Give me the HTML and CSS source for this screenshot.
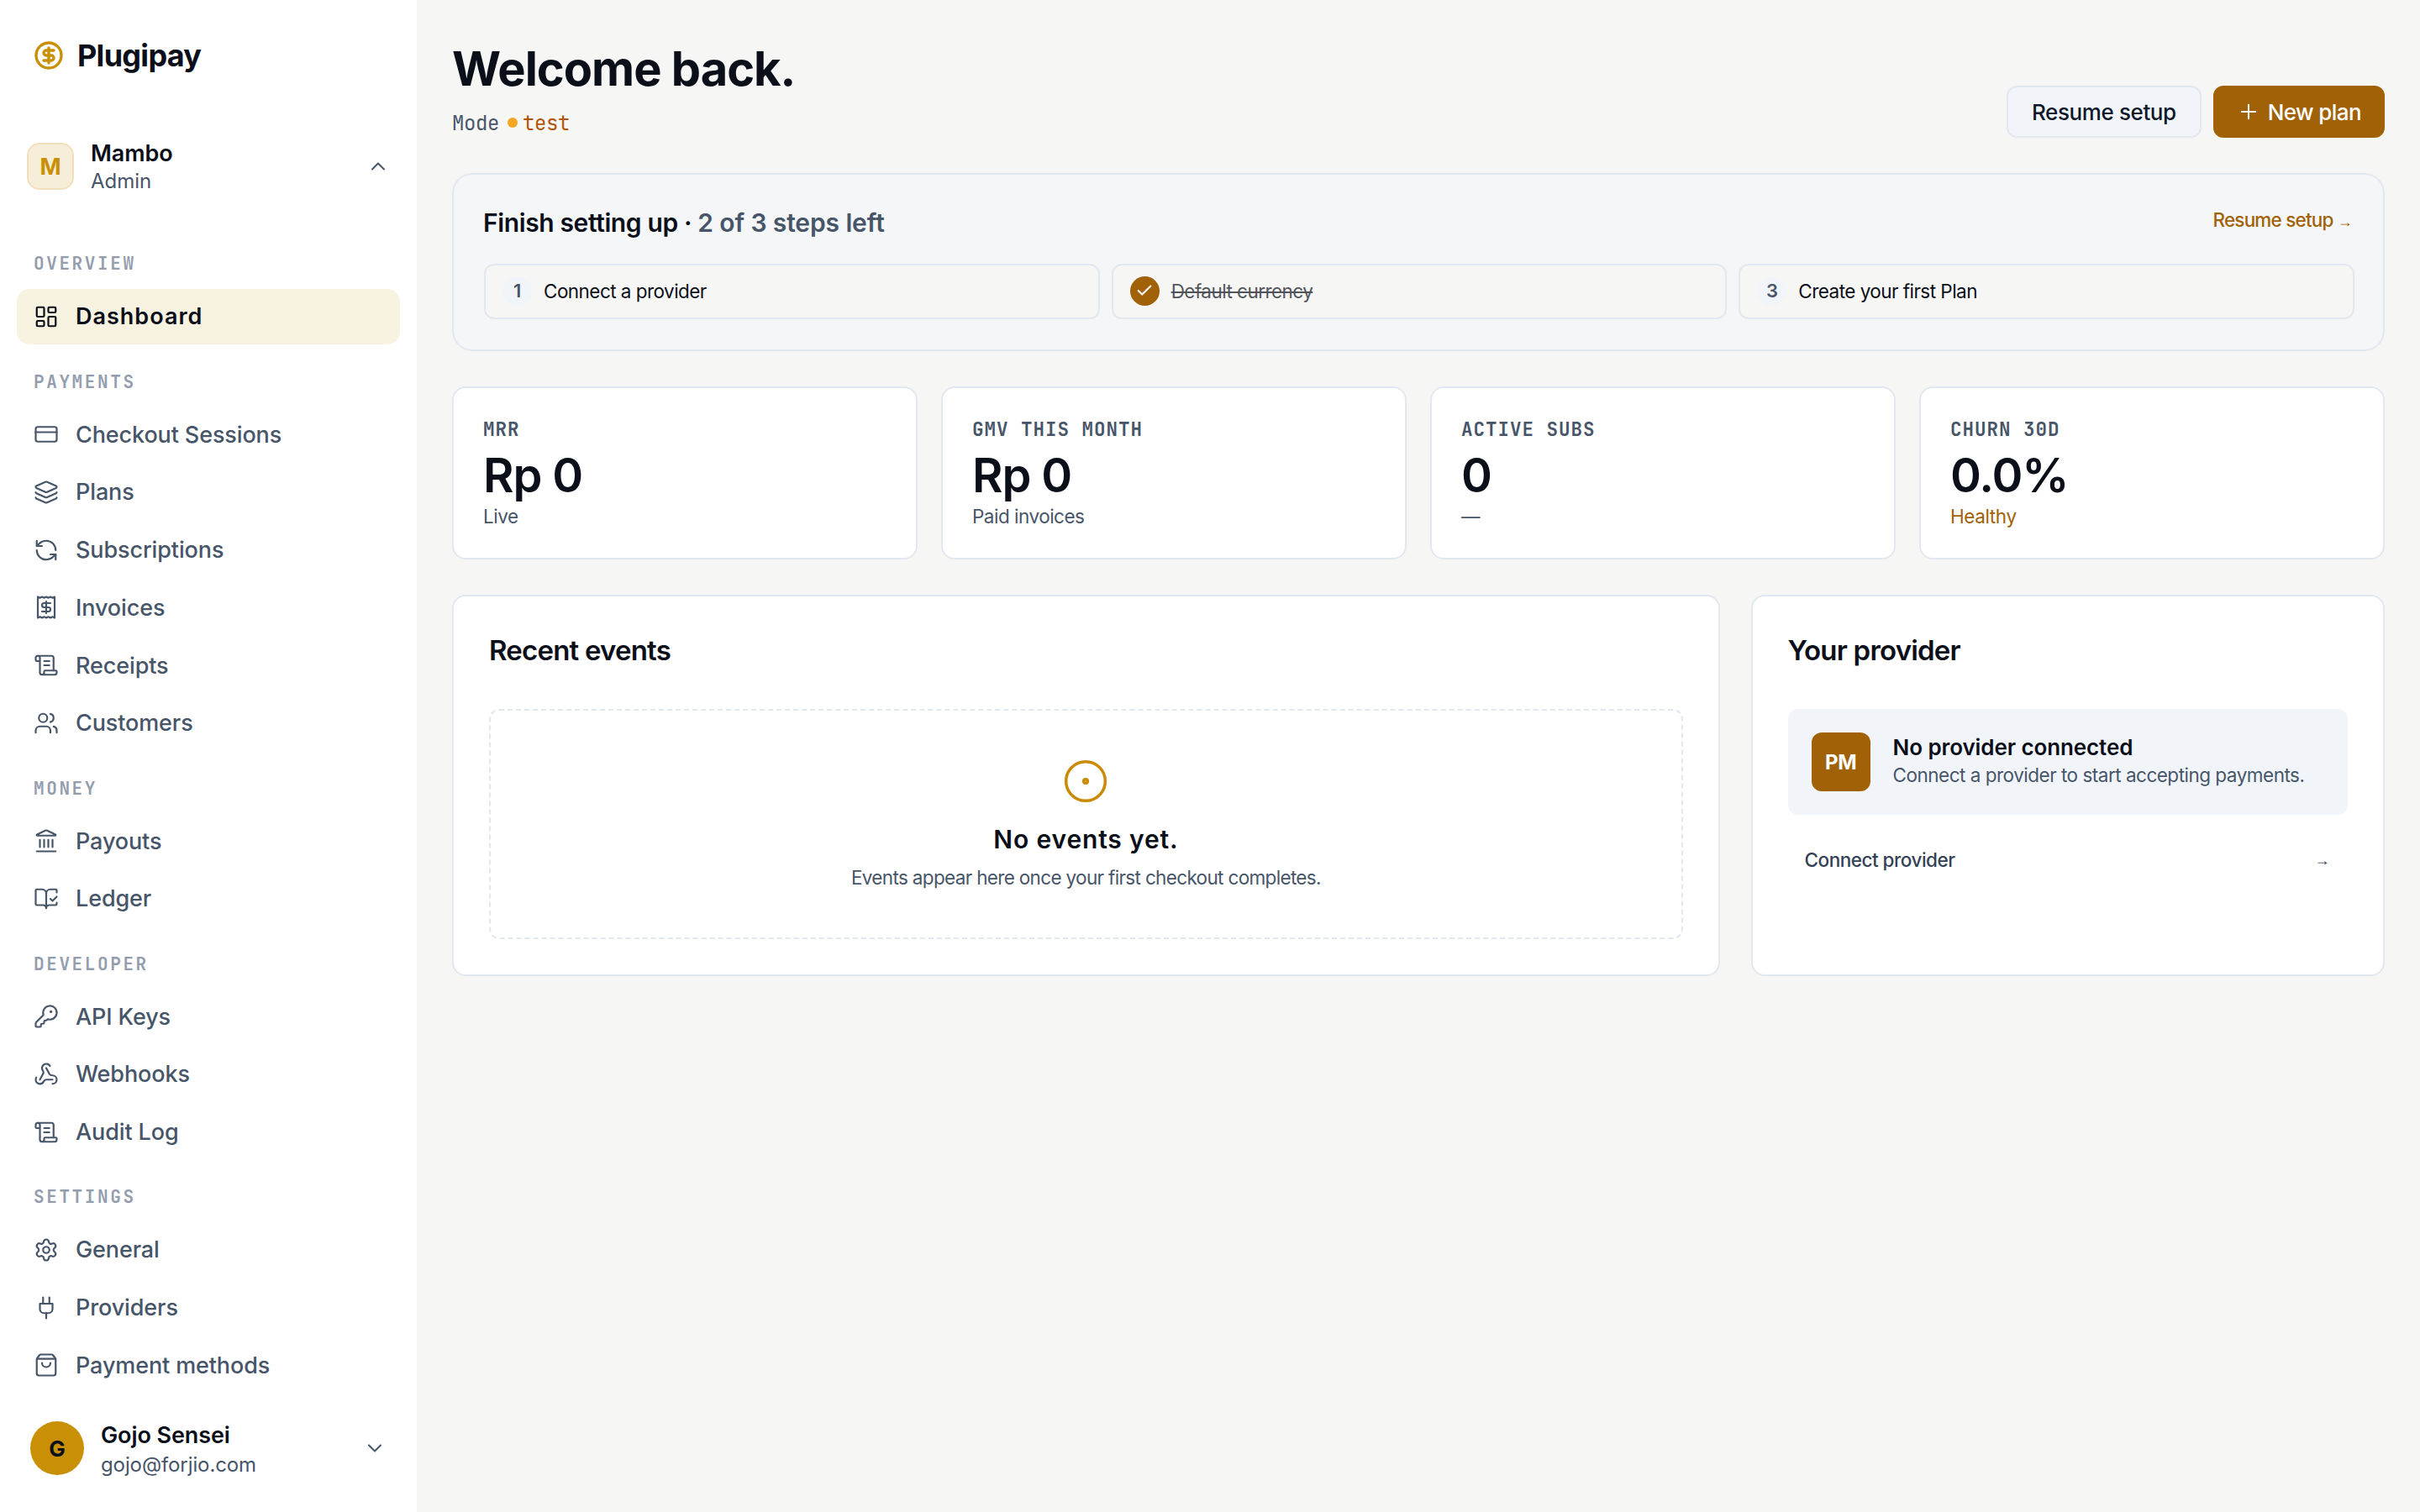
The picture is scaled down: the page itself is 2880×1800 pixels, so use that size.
FILE: index.html
```html
<!DOCTYPE html>
<html lang="en">

<head>
    <meta charset="UTF-8">
    <meta name="viewport" content="width=device-width, initial-scale=1.0">
    <title>Plugipay - Dashboard</title>
    <link rel="stylesheet" href="styles.css">
</head>

<body>
    <div class="app">
        <aside class="sidebar">
            <div class="brand">
                <svg class="icon brand-icon" viewBox="0 0 24 24"><circle cx="12" cy="12" r="10"/><path d="M16 8h-6a2 2 0 1 0 0 4h4a2 2 0 1 1 0 4H8"/><path d="M12 18V6"/></svg>
                <span>Plugipay</span>
            </div>

            <div class="workspace">
                <div class="workspace-logo">M</div>
                <div class="who">
                    <div class="who-name">Mambo</div>
                    <div class="who-sub">Admin</div>
                </div>
                <svg class="icon chevron" viewBox="0 0 24 24"><path d="m18 15-6-6-6 6"/></svg>
            </div>

            <nav class="nav">
                <div class="nav-label">OVERVIEW</div>
                <a class="nav-item active">
                    <svg class="icon" viewBox="0 0 24 24"><rect width="7" height="9" x="3" y="3" rx="1"/><rect width="7" height="5" x="14" y="3" rx="1"/><rect width="7" height="9" x="14" y="12" rx="1"/><rect width="7" height="5" x="3" y="16" rx="1"/></svg>
                    Dashboard
                </a>

                <div class="nav-label">PAYMENTS</div>
                <a class="nav-item">
                    <svg class="icon" viewBox="0 0 24 24"><rect width="20" height="14" x="2" y="5" rx="2"/><path d="M2 10h20"/></svg>
                    Checkout Sessions
                </a>
                <a class="nav-item">
                    <svg class="icon" viewBox="0 0 24 24"><path d="M12.83 2.18a2 2 0 0 0-1.66 0L2.6 6.08a1 1 0 0 0 0 1.83l8.58 3.91a2 2 0 0 0 1.66 0l8.58-3.9a1 1 0 0 0 0-1.83z"/><path d="M2 12a1 1 0 0 0 .58.91l8.6 3.91a2 2 0 0 0 1.65 0l8.58-3.9A1 1 0 0 0 22 12"/><path d="M2 17a1 1 0 0 0 .58.91l8.6 3.91a2 2 0 0 0 1.65 0l8.58-3.9A1 1 0 0 0 22 17"/></svg>
                    Plans
                </a>
                <a class="nav-item">
                    <svg class="icon" viewBox="0 0 24 24"><path d="M21 12a9 9 0 0 0-9-9 9.75 9.75 0 0 0-6.74 2.74L3 8"/><path d="M3 3v5h5"/><path d="M3 12a9 9 0 0 0 9 9 9.75 9.75 0 0 0 6.74-2.74L21 16"/><path d="M16 16h5v5"/></svg>
                    Subscriptions
                </a>
                <a class="nav-item">
                    <svg class="icon" viewBox="0 0 24 24"><path d="M4 2v20l2-1 2 1 2-1 2 1 2-1 2 1 2-1 2 1V2l-2 1-2-1-2 1-2-1-2 1-2-1-2 1Z"/><path d="M16 8h-6a2 2 0 1 0 0 4h4a2 2 0 1 1 0 4H8"/><path d="M12 17.5v-11"/></svg>
                    Invoices
                </a>
                <a class="nav-item">
                    <svg class="icon" viewBox="0 0 24 24"><path d="M15 12h-5"/><path d="M15 8h-5"/><path d="M19 17V5a2 2 0 0 0-2-2H4"/><path d="M8 21h12a2 2 0 0 0 2-2v-1a1 1 0 0 0-1-1H11a1 1 0 0 0-1 1v1a2 2 0 1 1-4 0V5a2 2 0 1 0-4 0v2a1 1 0 0 0 1 1h3"/></svg>
                    Receipts
                </a>
                <a class="nav-item">
                    <svg class="icon" viewBox="0 0 24 24"><path d="M16 21v-2a4 4 0 0 0-4-4H6a4 4 0 0 0-4 4v2"/><circle cx="9" cy="7" r="4"/><path d="M22 21v-2a4 4 0 0 0-3-3.87"/><path d="M16 3.13a4 4 0 0 1 0 7.75"/></svg>
                    Customers
                </a>

                <div class="nav-label">MONEY</div>
                <a class="nav-item">
                    <svg class="icon" viewBox="0 0 24 24"><path d="M10 18v-7"/><path d="M11.12 2.198a2 2 0 0 1 1.76.006l7.866 3.847c.476.233.31.949-.22.949H3.474c-.53 0-.695-.716-.22-.949z"/><path d="M14 18v-7"/><path d="M18 18v-7"/><path d="M3 22h18"/><path d="M6 18v-7"/></svg>
                    Payouts
                </a>
                <a class="nav-item">
                    <svg class="icon" viewBox="0 0 24 24"><path d="M12 21V7"/><path d="m16 12 2 2 4-4"/><path d="M22 6V4a1 1 0 0 0-1-1h-5a4 4 0 0 0-4 4 4 4 0 0 0-4-4H3a1 1 0 0 0-1 1v13a1 1 0 0 0 1 1h6a3 3 0 0 1 3 3 3 3 0 0 1 3-3h6a1 1 0 0 0 1-1v-1.3"/></svg>
                    Ledger
                </a>

                <div class="nav-label">DEVELOPER</div>
                <a class="nav-item">
                    <svg class="icon" viewBox="0 0 24 24"><path d="M2.586 17.414A2 2 0 0 0 2 18.828V21a1 1 0 0 0 1 1h3a1 1 0 0 0 1-1v-1a1 1 0 0 1 1-1h1a1 1 0 0 0 1-1v-1a1 1 0 0 1 1-1h.172a2 2 0 0 0 1.414-.586l.814-.814a6.5 6.5 0 1 0-4-4z"/><circle cx="16.5" cy="7.5" r=".5" fill="currentColor"/></svg>
                    API Keys
                </a>
                <a class="nav-item">
                    <svg class="icon" viewBox="0 0 24 24"><path d="M18 16.98h-5.99c-1.1 0-1.95.94-2.48 1.9A4 4 0 0 1 2 17c.01-.7.2-1.4.57-2"/><path d="m6 17 3.13-5.78c.53-.97.1-2.18-.5-3.1a4 4 0 1 1 6.89-4.06"/><path d="m12 6 3.13 5.73C15.66 12.7 16.9 13 18 13a4 4 0 0 1 0 8"/></svg>
                    Webhooks
                </a>
                <a class="nav-item">
                    <svg class="icon" viewBox="0 0 24 24"><path d="M15 12h-5"/><path d="M15 8h-5"/><path d="M19 17V5a2 2 0 0 0-2-2H4"/><path d="M8 21h12a2 2 0 0 0 2-2v-1a1 1 0 0 0-1-1H11a1 1 0 0 0-1 1v1a2 2 0 1 1-4 0V5a2 2 0 1 0-4 0v2a1 1 0 0 0 1 1h3"/></svg>
                    Audit Log
                </a>

                <div class="nav-label">SETTINGS</div>
                <a class="nav-item">
                    <svg class="icon" viewBox="0 0 24 24"><path d="M9.671 4.136a2.34 2.34 0 0 1 4.659 0 2.34 2.34 0 0 0 3.319 1.915 2.34 2.34 0 0 1 2.33 4.033 2.34 2.34 0 0 0 0 3.831 2.34 2.34 0 0 1-2.33 4.033 2.34 2.34 0 0 0-3.319 1.915 2.34 2.34 0 0 1-4.659 0 2.34 2.34 0 0 0-3.32-1.915 2.34 2.34 0 0 1-2.33-4.033 2.34 2.34 0 0 0 0-3.831A2.34 2.34 0 0 1 6.35 6.051a2.34 2.34 0 0 0 3.319-1.915"/><circle cx="12" cy="12" r="3"/></svg>
                    General
                </a>
                <a class="nav-item">
                    <svg class="icon" viewBox="0 0 24 24"><path d="M12 22v-5"/><path d="M9 8V2"/><path d="M15 8V2"/><path d="M18 8v5a4 4 0 0 1-4 4h-4a4 4 0 0 1-4-4V8Z"/></svg>
                    Providers
                </a>
                <a class="nav-item">
                    <svg class="icon" viewBox="0 0 24 24"><path d="M16 10a4 4 0 0 1-8 0"/><path d="M3.103 6.034h17.794"/><path d="M3.4 5.467a2 2 0 0 0-.4 1.2V20a2 2 0 0 0 2 2h14a2 2 0 0 0 2-2V6.667a2 2 0 0 0-.4-1.2l-2-2.667A2 2 0 0 0 17 2H7a2 2 0 0 0-1.6.8z"/></svg>
                    Payment methods
                </a>
            </nav>

            <div class="user">
                <div class="user-avatar">G</div>
                <div class="who">
                    <div class="who-name">Gojo Sensei</div>
                    <div class="who-sub">gojo@forjio.com</div>
                </div>
                <svg class="icon chevron" viewBox="0 0 24 24"><path d="m6 9 6 6 6-6"/></svg>
            </div>
        </aside>

        <main class="main">
            <header class="page-head">
                <div class="page-title">
                    <h1>Welcome back.</h1>
                    <div class="mode"><span>Mode</span><i class="dot"></i><span class="mode-value">test</span></div>
                </div>
                <div class="actions">
                    <button class="btn">Resume setup</button>
                    <button class="btn btn-primary">
                        <svg class="icon" viewBox="0 0 24 24"><path d="M5 12h14"/><path d="M12 5v14"/></svg>
                        New plan
                    </button>
                </div>
            </header>

            <section class="setup">
                <div class="setup-head">
                    <h2>Finish setting up · <span>2 of 3 steps left</span></h2>
                    <a class="link">Resume setup <span class="arrow">→</span></a>
                </div>
                <div class="steps">
                    <div class="step"><span class="step-num">1</span><span>Connect a provider</span></div>
                    <div class="step done">
                        <span class="step-num"><svg class="icon" viewBox="0 0 24 24"><path d="M20 6 9 17l-5-5"/></svg></span>
                        <span class="step-text">Default currency</span>
                    </div>
                    <div class="step"><span class="step-num">3</span><span>Create your first Plan</span></div>
                </div>
            </section>

            <section class="stats">
                <div class="stat">
                    <div class="stat-label">MRR</div>
                    <div class="stat-value">Rp 0</div>
                    <div class="stat-sub">Live</div>
                </div>
                <div class="stat">
                    <div class="stat-label">GMV THIS MONTH</div>
                    <div class="stat-value">Rp 0</div>
                    <div class="stat-sub">Paid invoices</div>
                </div>
                <div class="stat">
                    <div class="stat-label">ACTIVE SUBS</div>
                    <div class="stat-value">0</div>
                    <div class="stat-sub">—</div>
                </div>
                <div class="stat">
                    <div class="stat-label">CHURN 30D</div>
                    <div class="stat-value">0.0%</div>
                    <div class="stat-sub good">Healthy</div>
                </div>
            </section>

            <section class="panels">
                <div class="panel">
                    <h3>Recent events</h3>
                    <div class="empty">
                        <svg class="icon" viewBox="0 0 24 24"><circle cx="12" cy="12" r="10"/><circle cx="12" cy="12" r="1"/></svg>
                        <div class="empty-title">No events yet.</div>
                        <div class="empty-text">Events appear here once your first checkout completes.</div>
                    </div>
                </div>
                <div class="panel">
                    <h3>Your provider</h3>
                    <div class="provider">
                        <div class="provider-logo">PM</div>
                        <div class="provider-info">
                            <div class="provider-name">No provider connected</div>
                            <div class="provider-text">Connect a provider to start accepting payments.</div>
                        </div>
                    </div>
                    <a class="connect"><span>Connect provider</span><span class="arrow">→</span></a>
                </div>
            </section>
        </main>
    </div>
</body>

</html>
```

FILE: styles.css
```css
* {
    box-sizing: border-box;
}

body {
    margin: 0;
    background-color: #f6f6f4;
    color: #0b0f19;
    font-family: Inter, "Liberation Sans", sans-serif;
}

h1,
h2,
h3 {
    margin: 0;
}

/* laid out at 1440x900, shown at double size */
.app {
    display: flex;
    width: 1440px;
    height: 900px;
    zoom: 2;
}

.icon {
    flex: none;
    width: 15px;
    height: 15px;
    fill: none;
    stroke: currentColor;
    stroke-width: 1.75;
    stroke-linecap: round;
    stroke-linejoin: round;
}

/* sidebar */
.sidebar {
    display: flex;
    flex-direction: column;
    flex: none;
    width: 248px;
    background-color: #fff;
}

.brand {
    display: flex;
    align-items: center;
    flex: none;
    gap: 8px;
    height: 66px;
    padding: 0 20px;
    font-size: 18px;
    font-weight: 700;
    letter-spacing: -0.02em;
}

.brand-icon {
    width: 18px;
    height: 18px;
    color: #c99005;
    stroke-width: 2.25;
}

.workspace {
    display: flex;
    align-items: center;
    flex: none;
    gap: 10px;
    height: 30px;
    margin-top: 18px;
    padding: 0 16px;
}

.workspace-logo {
    display: flex;
    align-items: center;
    justify-content: center;
    width: 28px;
    height: 28px;
    border: 1px solid #f1dfba;
    border-radius: 7.5px;
    background-color: #f7eeda;
    color: #c99005;
    font-size: 13.5px;
    font-weight: 700;
}

.who {
    flex: 1;
    padding-top: 1px;
}

.who-name {
    font-size: 13.5px;
    font-weight: 600;
    line-height: 17px;
    letter-spacing: -0.05px;
}

.who-sub {
    color: #475569;
    font-size: 12px;
    line-height: 16px;
}

.chevron {
    width: 14px;
    height: 14px;
    color: #475569;
}

.nav {
    flex: 1;
    min-height: 0;
    margin-top: 20.75px;
    padding: 0 10px;
    overflow: hidden;
}

.nav-label {
    padding: 14.9px 10px 7.35px;
    color: #949dad;
    font-family: "JetBrains Mono", "DejaVu Sans Mono", monospace;
    font-size: 10.5px;
    font-weight: 600;
    line-height: 15px;
    letter-spacing: 1.3px;
}

.nav-item {
    display: flex;
    align-items: center;
    gap: 10px;
    height: 32.9px;
    padding: 0 10px;
    border-radius: 7.5px;
    color: #475569;
    font-size: 13.5px;
    font-weight: 500;
    letter-spacing: -0.06px;
}

.nav-item + .nav-item {
    margin-top: 1.475px;
}

.nav-item.active {
    background-color: #f8f2e0;
    color: #0b0f19;
    font-weight: 600;
    letter-spacing: 0.5px;
}

.user {
    display: flex;
    align-items: center;
    flex: none;
    gap: 10px;
    height: 76px;
    padding: 0 18px;
}

.user .who {
    padding-top: 3px;
}

.user .who-sub {
    line-height: 18px;
    letter-spacing: -0.05px;
}

.user-avatar {
    display: flex;
    align-items: center;
    justify-content: center;
    width: 32px;
    height: 32px;
    border-radius: 50%;
    background-color: #c99005;
    font-size: 13px;
    font-weight: 700;
}

/* main column */
.main {
    flex: 1;
    padding: 22px 21px;
}

.page-head {
    display: flex;
    justify-content: space-between;
    align-items: flex-end;
    height: 60px;
}

.page-title {
    align-self: flex-start;
}

h1 {
    font-size: 28px;
    font-weight: 700;
    line-height: 38px;
    letter-spacing: -0.018em;
}

.mode {
    display: flex;
    align-items: center;
    height: 22px;
    margin-top: 2px;
    color: #475569;
    font-family: "JetBrains Mono", "DejaVu Sans Mono", monospace;
    font-size: 12px;
    letter-spacing: -0.2px;
}

.dot {
    width: 6px;
    height: 6px;
    margin: 0 3px 0 5px;
    border-radius: 50%;
    background-color: #f5a524;
}

.mode-value {
    color: #b45309;
}

.actions {
    display: flex;
    gap: 7px;
}

.btn {
    display: flex;
    align-items: center;
    gap: 4.5px;
    height: 31px;
    padding: 0 14px;
    border: 1px solid #e2e8f0;
    border-radius: 6px;
    background-color: #f1f5f9;
    color: #0f172a;
    font-family: inherit;
    font-size: 13px;
    font-weight: 500;
    letter-spacing: -0.2px;
}

.btn-primary {
    padding: 0 13px;
    border-color: #a16207;
    background-color: #a16207;
    color: #fff;
    letter-spacing: -0.3px;
}

.btn .icon {
    width: 14px;
    height: 14px;
}

.setup {
    height: 106px;
    margin-top: 21px;
    padding: 18px 17px 18px 18px;
    border: 1px solid #e2e8f0;
    border-radius: 12px;
    background-color: #f4f6f7;
}

.setup-head {
    display: flex;
    justify-content: space-between;
    height: 35px;
}

.setup-head h2 {
    margin-left: -0.5px;
    font-size: 15px;
    font-weight: 600;
    line-height: 21px;
    letter-spacing: -0.19px;
}

.setup-head h2 span {
    color: #475569;
    letter-spacing: -0.06px;
}

.link {
    padding-right: 1.5px;
    color: #a16207;
    font-size: 11.25px;
    font-weight: 500;
    line-height: 18px;
    letter-spacing: -0.4px;
}

.arrow {
    font-family: "Liberation Sans", sans-serif;
    font-size: 9px;
}

.steps {
    display: grid;
    grid-template-columns: repeat(3, 1fr);
    gap: 7px;
}

.step {
    display: flex;
    align-items: center;
    gap: 7px;
    height: 33px;
    padding: 0 10px 1px;
    border: 1px solid #e2e8f0;
    border-radius: 6px;
    background-color: #f6f6f4;
    font-size: 11.25px;
    letter-spacing: -0.27px;
}

.step-num {
    display: flex;
    align-items: center;
    justify-content: center;
    width: 17.5px;
    height: 17.5px;
    border-radius: 50%;
    background-color: #f1f5f9;
    color: #475569;
    font-size: 11px;
    font-weight: 600;
}

.step.done .step-num {
    background-color: #a16207;
    color: #fff;
}

.step .icon {
    width: 11px;
    height: 11px;
    stroke-width: 2.25;
}

.step-text {
    opacity: 0.7;
    text-decoration: line-through;
}

.stats {
    display: grid;
    grid-template-columns: repeat(4, 1fr);
    gap: 14px;
    margin-top: 21px;
}

.stat {
    height: 103px;
    padding: 17px 17.5px;
    border: 1px solid #e2e8f0;
    border-radius: 8px;
    background-color: #fff;
}

.stat-label {
    color: #475569;
    font-family: "JetBrains Mono", "DejaVu Sans Mono", monospace;
    font-size: 11.25px;
    font-weight: 700;
    line-height: 15px;
    letter-spacing: 0.5px;
}

.stat-value {
    margin-top: 2px;
    font-size: 28px;
    font-weight: 600;
    line-height: 36px;
    letter-spacing: -0.02em;
}

.stat-sub {
    color: #475569;
    font-size: 11.25px;
    line-height: 13px;
    letter-spacing: -0.25px;
}

.stat-sub.good {
    color: #a16207;
    letter-spacing: -0.2px;
}

.panels {
    display: grid;
    grid-template-columns: 2fr 1fr;
    gap: 18.4px;
    margin-top: 21px;
}

.panel {
    height: 227px;
    padding: 21px;
    border: 1px solid #e2e8f0;
    border-radius: 8px;
    background-color: #fff;
}

h3 {
    height: 46px;
    font-size: 16.5px;
    font-weight: 600;
    line-height: 22px;
    letter-spacing: -0.4px;
}

.empty {
    display: flex;
    flex-direction: column;
    align-items: center;
    height: 137px;
    padding-top: 28px;
    border: 1px dashed #e2e8f0;
    border-radius: 6px;
}

.empty .icon {
    width: 28px;
    height: 28px;
    color: #ca8a04;
    stroke-width: 1.5;
}

.empty-title {
    margin-top: 10px;
    font-size: 15px;
    font-weight: 600;
    line-height: 21px;
    letter-spacing: 0.42px;
}

.empty-text {
    margin-top: 4px;
    color: #475569;
    font-size: 11.25px;
    line-height: 17px;
    letter-spacing: -0.33px;
}

.provider {
    display: flex;
    align-items: center;
    gap: 13.5px;
    height: 63px;
    padding: 0 14px;
    border-radius: 6px;
    background-color: #f1f5f9;
}

.provider-logo {
    display: flex;
    align-items: center;
    justify-content: center;
    flex: none;
    width: 35px;
    height: 35px;
    border-radius: 6px;
    background-color: #a16207;
    color: #fff;
    font-size: 12px;
    font-weight: 700;
    letter-spacing: -0.2px;
}

.provider-info {
    padding-bottom: 1px;
}

.provider-name {
    font-size: 13px;
    font-weight: 600;
    line-height: 17px;
    letter-spacing: -0.05px;
}

.provider-text {
    color: #475569;
    font-size: 11.25px;
    line-height: 16px;
    letter-spacing: -0.25px;
    white-space: nowrap;
}

.connect {
    display: flex;
    justify-content: space-between;
    margin-top: 18px;
    padding: 0 11px 0 10px;
    color: #334155;
    font-size: 11.25px;
    font-weight: 500;
    line-height: 18px;
    letter-spacing: -0.25px;
}
```
